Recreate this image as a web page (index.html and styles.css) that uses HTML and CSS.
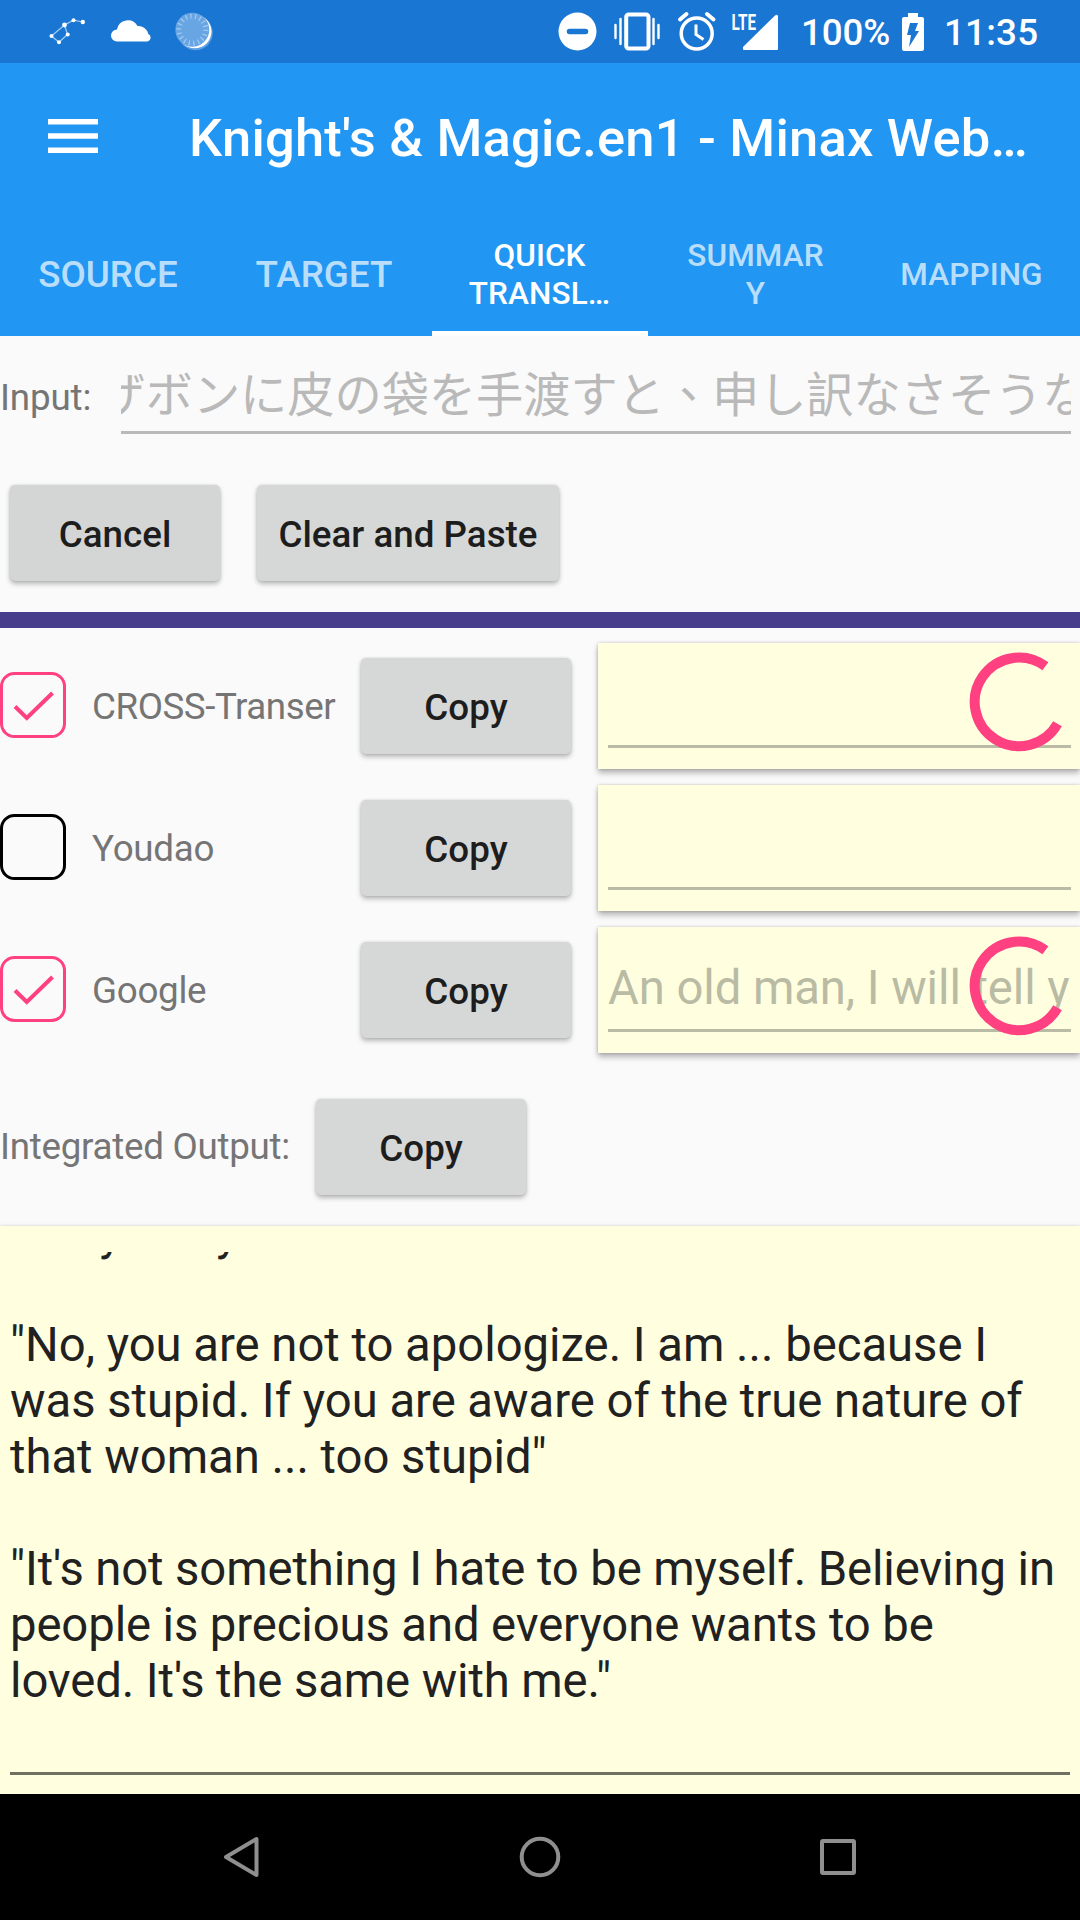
FILE: index.html
```html
<!DOCTYPE html>
<html lang="zh-TW">
<head>
<meta charset="utf-8">
<title>Minax Web Translator</title>
<link rel="stylesheet" href="styles.css">
</head>
<body>
<div class="screen">
  <header class="status">
    <svg class="status-left" viewBox="0 0 230 63" width="230" height="63">
      <path d="M51.500 36 59 42.300 67.500 34.500 64.500 25ZM64.500 25 73.500 20.200 82.800 22" fill="none" stroke="#a9cdf0" stroke-width="1.200"/>
      <g fill="#fff">
        <circle cx="51.500" cy="36" r="2"/><circle cx="59" cy="42.300" r="2"/><circle cx="67.700" cy="34.500" r="2"/>
        <circle cx="64.500" cy="25" r="2.400"/><circle cx="73.500" cy="20.200" r="2"/><circle cx="82.800" cy="22" r="2.200"/>
        <path d="M117 41.500a6 6 0 0 1 0-12 11 11 0 0 1 20.500-3.500 10 10 0 0 1 10.800 8 4 4 0 0 1-.6 7.500z"/>
      </g>
      <circle cx="195.500" cy="33" r="17.300" fill="#5a9de2"/>
      <circle cx="194.700" cy="31.500" r="16.800" fill="#fff"/>
      <circle cx="192.300" cy="29.700" r="17" fill="#68a5e3"/>
      <circle cx="192.300" cy="29.700" r="13.500" fill="none" stroke="#a5caef" stroke-width="5" stroke-dasharray="1.200 3.512"/>
    </svg>
    <div class="status-right">
      <svg class="status-icons" viewBox="550 0 240 63" width="240" height="63">
        <circle cx="577.500" cy="31.500" r="19" fill="#fff"/>
        <path d="M569.500 31.500h16" stroke="#1976d2" stroke-width="5.500" stroke-linecap="round"/>
        <g fill="none" stroke="#fff">
          <rect x="626.200" y="14.500" width="22.300" height="34" rx="2.500" stroke-width="4"/>
          <path d="M615.500 25v13M620.500 19v25M653.500 19v25M658.500 25v13" stroke-width="2.400" stroke-linecap="round"/>
          <circle cx="696.700" cy="33.500" r="15.500" stroke-width="3.500"/>
          <path d="M696 24.500v10l7.500 5" stroke-width="3"/>
          <path d="M680 19.500l6.500-5.500M707 14l6.500 5.500" stroke-width="4" stroke-linecap="round"/>
        </g>
        <path d="M744 50a1 1 0 0 1-1-1v-2L775 15.500q3-2 3 1V49a1 1 0 0 1-1 1z" fill="#fff"/>
        <text class="lte" x="731.500" y="29.800" textLength="24.500" lengthAdjust="spacingAndGlyphs">LTE</text>
      </svg>
      <span class="percent">100%</span>
      <svg class="battery" viewBox="0 0 22 38" width="22" height="38">
        <path d="M6 0h10v4h4a2 2 0 0 1 2 2v30a2 2 0 0 1-2 2H2a2 2 0 0 1-2-2V6a2 2 0 0 1 2-2h4z" fill="#fff"/>
        <path d="M8 10h8l-3 8h4L7 34l2-12H5z" fill="#1976d2"/>
      </svg>
      <span class="clock">11:35</span>
    </div>
  </header>

  <div class="appbar">
    <svg class="menu" viewBox="0 0 50 34" width="50" height="34"><path d="M0 2.800h50M0 17h50M0 31.200h50" stroke="#fff" stroke-width="5.500"/></svg>
    <h1 class="title">Knight's &amp; Magic.en1 - Minax Web…</h1>
  </div>
  <nav class="tabs">
    <span class="tab">SOURCE</span>
    <span class="tab">TARGET</span>
    <span class="tab small active">QUICK<br>TRANSL…</span>
    <span class="tab small">SUMMAR<br>Y</span>
    <span class="tab small">MAPPING</span>
  </nav>

  <main class="content">
    <div class="input-row">
      <label class="label">Input:</label>
      <div class="field"><span class="field-text">ザボンに皮の袋を手渡すと、申し訳なさそうな</span></div>
    </div>
    <div class="actions">
      <button class="btn pressed">Cancel</button>
      <button class="btn wide">Clear and Paste</button>
    </div>
    <div class="divider"></div>

    <div class="engines">
      <div class="engine">
        <svg class="check on" viewBox="0 0 66 66" width="66" height="66"><rect x="1.500" y="1.500" width="63" height="63" rx="13"/><path class="tick" d="M15 34.500 26.800 46 52.500 21"/></svg>
        <span class="label name tight">CROSS-Transer</span>
        <button class="btn">Copy</button>
        <div class="output"><div class="line"></div>
          <svg class="spinner" viewBox="0 0 100 100" width="100" height="100"><path d="M76.400 14.300A44.300 44.300 0 1 0 88.500 71.800"/></svg>
        </div>
      </div>
      <div class="engine">
        <svg class="check" viewBox="0 0 66 66" width="66" height="66"><rect x="1.500" y="1.500" width="63" height="63" rx="13"/></svg>
        <span class="label name">Youdao</span>
        <button class="btn">Copy</button>
        <div class="output"><div class="line"></div></div>
      </div>
      <div class="engine">
        <svg class="check on" viewBox="0 0 66 66" width="66" height="66"><rect x="1.500" y="1.500" width="63" height="63" rx="13"/><path class="tick" d="M15 34.500 26.800 46 52.500 21"/></svg>
        <span class="label name">Google</span>
        <button class="btn">Copy</button>
        <div class="output"><div class="line">An old man, I will tell y</div>
          <svg class="spinner" viewBox="0 0 100 100" width="100" height="100"><path d="M76.400 14.300A44.300 44.300 0 1 0 88.500 71.800"/></svg>
        </div>
      </div>
    </div>

    <div class="integrated">
      <span class="label">Integrated Output:</span>
      <button class="btn">Copy</button>
    </div>

    <section class="result">
      <div class="scroller">
        <p class="para">badly sorry</p>
        <p class="para">"No, you are not to apologize. I am ... because I<br>was stupid. If you are aware of the true nature of<br>that woman ... too stupid"</p>
        <p class="para last">"It's not something I hate to be myself. Believing in<br>people is precious and everyone wants to be<br>loved. It's the same with me."</p>
      </div>
    </section>
  </main>

  <footer class="navbar">
    <svg viewBox="0 0 1080 126" width="1080" height="126" fill="none" stroke="#8f8f8f" stroke-width="4" stroke-linejoin="round">
      <path d="M256.500 45v36L226 63z"/>
      <circle cx="540" cy="63" r="18.300"/>
      <rect x="822" y="47" width="32" height="32" rx="1"/>
    </svg>
  </footer>
</div>
</body>
</html>
```
FILE: styles.css
```css
* { box-sizing: border-box; }
body { margin: 0; background: #fafafa; font-family: Roboto, "Noto Sans CJK TC", sans-serif; }
.screen { width: 1080px; height: 1920px; display: flex; flex-direction: column; overflow: hidden; }
svg { display: block; flex: none; }

.status { height: 63px; flex: none; background: #1976d2; color: #fff; display: flex; justify-content: space-between; }
.status-right { display: flex; align-items: center; padding-right: 40px; font-size: 36.75px; font-weight: 500; }
.lte { font: 700 22px Roboto, sans-serif; fill: #fff; }
.percent { margin-left: 11px; width: 92px; padding-top: 2px; letter-spacing: -.1px; white-space: nowrap; }
.battery { margin: 0 20px 0 9px; }
.clock { width: 96px; padding-top: 2px; letter-spacing: .2px; white-space: nowrap; }

.appbar { height: 147px; flex: none; background: #2196f3; color: #fff; display: flex; align-items: center; padding: 0 0 0 48px; gap: 91px; }
.menu { margin-bottom: 2px; }
.title { margin: 3px 0 0; font-size: 52.5px; font-weight: 500; line-height: 62px; letter-spacing: .2px; white-space: nowrap; }

.tabs { height: 126px; flex: none; background: #2196f3; display: grid; grid-template-columns: repeat(5, 216px); }
.tab { display: flex; align-items: center; justify-content: center; text-align: center; font-size: 36.75px; font-weight: 500; line-height: 43px; color: rgba(255,255,255,.7); border-bottom: 5px solid transparent; padding-top: 7px; }
.tab.small { font-size: 31.5px; line-height: 38px; letter-spacing: .1px; padding: 9px 1px 0 0; }
.tab.active { color: #fff; border-bottom-color: #fff; }

.content { flex: 1; display: flex; flex-direction: column; min-height: 0; }
.label { font-size: 36.75px; line-height: 44px; letter-spacing: -.28px; color: #757575; white-space: nowrap; }
.label.tight { letter-spacing: -.46px; }
.input-row { height: 124px; display: flex; align-items: flex-start; }
.input-row .label { width: 121px; padding-top: 40px; letter-spacing: -.15px; }
.field { width: 950px; height: 98px; padding-top: 35px; border-bottom: 3px solid #b9b9b9; overflow: hidden; }
.field-text { display: block; margin-left: -22.500px; height: 60px; font-size: 47.25px; line-height: 50px; letter-spacing: -.06px; color: #b9b9b9; white-space: nowrap; }

.actions { height: 152px; display: flex; gap: 37px; padding: 25px 0 0 10px; }
.btn { width: 210px; height: 96px; flex: none; border: 0; border-radius: 5px; padding: 4px 0 0; background: #d6d8d7; color: #1d1d1d; font: 500 36.75px/44px Roboto, sans-serif; box-shadow: 0 3px 5px rgba(0,0,0,.26), 0 0 3px rgba(0,0,0,.12); }
.btn.pressed { background: #d4d6d5; }
.btn.wide { width: 302px; }
.divider { height: 16px; flex: none; background: #483d8b; }

.engines { display: flex; flex-direction: column; gap: 16px; padding-top: 15px; }
.engine { height: 126px; display: flex; align-items: center; }
.check { fill: none; stroke: #000; stroke-width: 3; margin-bottom: 2px; }
.check.on { stroke: #ff4081; }
.tick { stroke-width: 4; }
.name { width: 269px; margin-left: 26px; padding-top: 1px; }
.output { width: 482px; height: 126px; margin-left: 27px; padding: 20px 9px 0 10px; background: #ffffe0; position: relative; box-shadow: 0 4px 6px rgba(0,0,0,.28), 0 0 3px rgba(0,0,0,.2); }
.line { height: 85px; padding-top: 13px; border-bottom: 3px solid #babba4; font-size: 47.25px; line-height: 56px; letter-spacing: -.08px; color: #babba4; white-space: nowrap; overflow: hidden; }
.spinner { position: absolute; left: 371px; top: 9px; fill: none; stroke: #ff4081; stroke-width: 10; }

.integrated { height: 173px; display: flex; align-items: center; gap: 26px; padding-top: 14px; }
.integrated .label { width: 290px; padding-top: 1px; }

.result { flex: 1; min-height: 0; background: #ffffe0; padding: 26px 10px 19px; box-shadow: 0 0 3px rgba(0,0,0,.2); }
.scroller { height: 100%; overflow: hidden; border-bottom: 3px solid #6f6f62; color: #212121; font-size: 47.25px; line-height: 56px; letter-spacing: -.02px; white-space: nowrap; }
.para { margin: 0 0 56px; }
.para:first-child { margin-top: -47px; letter-spacing: -.2px; }
.para.last { letter-spacing: -.11px; }

.navbar { height: 126px; flex: none; background: #000; }
```
